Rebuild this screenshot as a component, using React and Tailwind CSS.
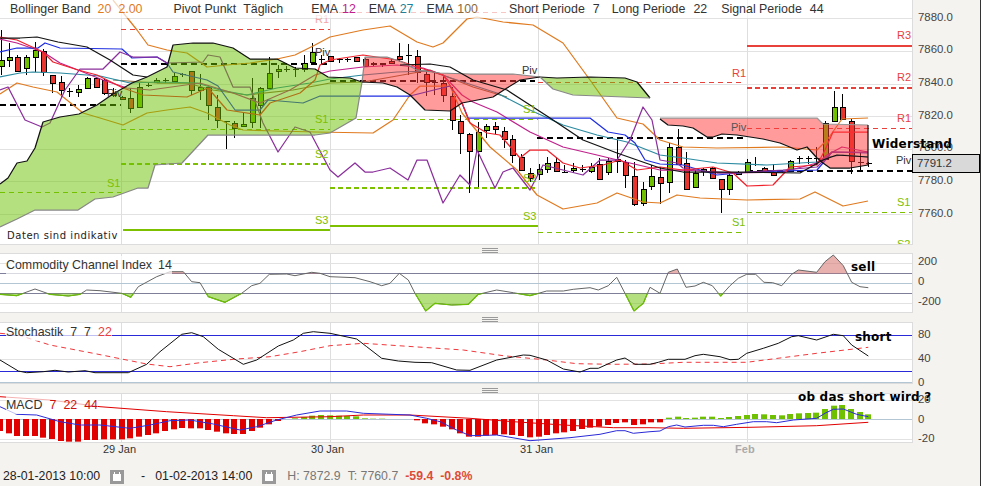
import React from "react";

// zoomed crop coords -> page coords
const zp = (off, top, arr) => arr.map(([x, y]) => [off + x / 3, top + y / 3]);
const line = (arr) => arr.map(([x, y]) => `${x.toFixed(1)},${y.toFixed(1)}`).join(" ");

// main chart series, page coords
const bollUp = [[113,0],[137,30],[148,45],[167,50],[187,53],[207,67],[227,65],[250,63],[277,59],[295,55],[315,45],[330,37],[363,30],[390,26],[417,42],[433,47],[443,43],[467,19],[477,17],[503,22],[533,25],[563,43],[590,80],[617,118],[643,124],[660,140],[683,147],[717,148],[783,147],[817,150],[827,140],[842,119],[868,118]];
const bollLow = [[0,94],[17,83],[33,87],[57,92],[83,113],[100,118],[123,125],[147,113],[167,110],[190,107],[207,113],[230,125],[243,130],[277,131],[315,132],[373,133],[393,120],[410,95],[420,86],[450,86],[462,113],[490,147],[517,170],[537,195],[563,209],[597,203],[617,193],[643,202],[660,203],[677,195],[700,198],[747,200],[800,199],[815,192],[843,206],[868,201]];
const purple = [[0,90],[8,87],[25,120],[42,127],[50,123],[65,90],[80,69],[103,69],[120,52],[133,57],[157,57],[167,63],[203,62],[208,55],[220,57],[233,87],[250,87],[263,123],[278,152],[295,127],[310,132],[330,170],[338,177],[355,163],[365,172],[373,172],[390,168],[408,180],[417,160],[427,160],[443,203],[460,175],[470,185],[477,150],[495,188],[503,172],[513,168],[530,190],[543,165],[563,170],[583,175],[600,160],[617,160],[630,140],[643,107],[652,120],[660,160],[677,163],[683,168],[717,173],[733,173],[783,170],[817,167],[832,152],[868,152]];
const blue = [[0,52],[17,48],[38,48],[45,43],[60,48],[122,49],[132,58],[157,57],[167,63],[173,72],[207,80],[218,86],[235,110],[260,110],[268,100],[303,103],[320,96],[410,96],[450,86],[462,103],[468,118],[590,118],[608,132],[625,135],[635,143],[645,160],[660,164],[683,165],[717,175],[750,172],[817,170],[823,163],[832,152],[868,153]];
const red = [[0,37],[17,40],[43,52],[53,62],[78,70],[97,75],[123,88],[143,95],[187,97],[208,88],[227,110],[260,115],[270,103],[300,93],[315,80],[320,65],[330,60],[363,55],[397,60],[417,67],[443,75],[462,103],[470,123],[487,133],[500,135],[520,158],[530,150],[547,150],[563,163],[580,168],[603,165],[620,160],[637,170],[660,167],[683,170],[713,167],[733,173],[747,186],[773,185],[790,167],[817,165],[825,150],[833,132],[868,132]];
const ema12 = [[0,39],[17,43],[43,52],[60,63],[78,70],[103,80],[127,88],[150,90],[200,83],[233,93],[260,103],[290,90],[315,75],[330,71],[363,67],[397,65],[423,68],[443,75],[462,95],[473,102],[497,112],[530,132],[563,147],[597,155],[630,163],[660,170],[683,170],[733,173],[783,172],[817,163],[827,155],[842,147],[868,152]];
const ema27 = [[0,77],[20,73],[33,72],[60,73],[100,76],[130,83],[157,82],[197,83],[220,90],[247,95],[277,88],[310,83],[330,79],[363,75],[397,72],[430,71],[463,82],[497,93],[530,110],[563,125],[597,135],[627,142],[660,155],[683,158],[717,163],[767,165],[817,162],[827,157],[843,155],[868,157]];
const ema100 = [[113,80],[157,83],[187,83],[213,90],[247,95],[293,90],[330,83],[363,82],[397,76],[430,70],[473,87],[507,97]];
const blackCurve = [[0,38],[20,38],[37,37],[58,42],[87,47],[110,60],[133,75],[147,77]];
const blackCurve2 = [[400,65],[430,64],[450,67],[473,80],[507,90],[550,118],[583,140],[617,153],[660,168],[683,172],[733,172],[800,173],[823,160],[837,155],[868,157]];

const greenUp = [[0,184],[8,178],[17,163],[27,161],[35,148],[43,122],[60,117],[79,114],[97,105],[113,94],[132,83],[147,77],[167,67],[173,45],[193,43],[213,43],[233,48],[250,59],[277,59],[295,68],[315,69],[328,77],[350,78],[362,82]];
const greenLow = [[362,82],[356,118],[330,133],[315,135],[208,135],[182,163],[155,165],[148,188],[138,188],[113,197],[95,199],[78,210],[35,210],[17,219],[0,227]];
const redUp = [[362,82],[365,57],[387,57],[402,62],[417,70],[440,73],[470,74],[513,74],[540,77]];
const redLow = [[540,77],[520,80],[507,88],[493,97],[462,103],[450,111],[425,110],[410,95],[397,87],[383,83],[362,82]];
const green2Up = [[540,77],[557,78],[590,77],[625,78],[637,82],[650,98]];
const green2Low = [[650,98],[573,95],[553,89],[540,77]];
const red2Up = [[660,118],[817,118],[823,124],[868,125],[868,165]];
const red2Low = [[868,165],[850,168],[830,168],[823,163],[817,158],[807,147],[797,150],[780,143],[763,139],[737,135],[722,134],[713,137],[707,137],[693,128],[683,126],[668,125],[660,119]];

// z, top, bottom, wickTop, wickBottom, colour (g / r / k)
const candlesA = [[2,180,197,90,225,"g"],[27,172,182,130,200,"g"],[52,170,212,165,215,"r"],[78,172,205,165,225,"g"],[105,150,170,125,215,"g"],[130,152,215,148,228,"r"],[155,225,248,225,280,"r"],[182,245,268,228,295,"r"],[208,274,275,265,290,"k"],[233,268,276,255,292,"g"],[260,235,265,232,265,"g"],[287,235,262,232,262,"r"],[313,240,280,238,285,"r"],[338,278,285,265,290,"r"],[365,292,298,288,300,"r"],[391,295,325,265,340,"r"],[417,262,322,250,325,"g"],[443,256,257,250,260,"k"],[468,240,246,235,250,"g"],[495,239,240,233,250,"k"],[521,229,243,220,245,"g"],[547,223,224,220,232,"k"],[573,214,270,212,285,"r"],[599,262,270,222,300,"g"],[625,262,316,260,360,"r"],[651,320,360,285,385,"r"],[677,363,364,362,447,"k"],[703,368,382,362,415,"r"],[729,373,379,335,380,"g"],[755,295,368,235,385,"g"],[781,265,317,262,385,"g"],[807,218,263,170,265,"g"],[833,208,214,195,235,"g"],[859,208,209,197,215,"k"],[885,208,209,200,232,"k"],[911,188,206,165,215,"g"],[937,157,187,130,190,"g"],[963,176,177,165,188,"k"]];
const candlesB = [[0,168,182,168,184,"r"],[26,177,178,175,188,"k"],[52,177,178,175,185,"k"],[78,170,182,170,183,"r"],[104,178,198,175,200,"r"],[130,188,192,186,198,"r"],[156,190,193,188,200,"r"],[182,183,190,175,192,"r"],[208,167,177,130,185,"r"],[234,166,167,132,225,"k"],[260,167,215,150,250,"r"],[288,223,247,213,287,"r"],[313,246,247,220,285,"k"],[339,248,283,225,305,"r"],[365,287,360,262,390,"r"],[391,363,398,345,462,"r"],[417,403,455,400,578,"r"],[443,395,452,365,560,"g"],[469,379,392,372,413,"g"],[495,379,388,365,402,"r"],[521,392,415,380,443,"r"],[547,418,465,405,490,"r"],[573,470,508,462,510,"r"],[599,518,532,505,545,"r"],[626,508,523,492,540,"g"],[651,490,507,472,518,"g"],[677,485,512,472,516,"r"],[703,515,516,495,518,"k"],[730,503,508,490,518,"g"],[756,506,507,495,515,"k"],[782,500,512,490,520,"g"],[808,493,538,475,540,"r"],[834,482,515,475,525,"g"],[860,477,484,420,518,"r"],[886,485,523,480,565,"r"],[912,527,610,485,618,"r"],[938,567,608,547,617,"g"]];
const candlesC = [[4,527,558,495,570,"g"],[30,530,547,500,612,"r"],[57,442,547,430,578,"g"],[83,440,490,388,495,"r"],[108,488,565,455,570,"r"],[135,520,563,510,565,"g"],[160,508,513,505,528,"g"],[186,505,535,500,537,"r"],[212,538,568,538,638,"r"],[238,525,568,520,585,"g"],[264,517,522,512,525,"g"],[290,485,515,478,520,"g"],[316,491,492,472,498,"k"],[343,503,515,500,520,"r"],[369,515,523,492,525,"r"],[395,514,515,510,518,"k"],[421,482,512,480,515,"g"],[447,474,475,468,492,"k"],[473,474,475,467,492,"k"],[499,473,474,440,495,"k"],[525,368,475,362,478,"g"],[551,322,365,272,365,"g"],[577,322,357,283,357,"r"],[603,362,482,358,522,"r"],[629,486,487,455,515,"k"],[655,489,490,485,500,"k"]];

const hLines = [
  { x1: 0, x2: 121, y: 105, c: "#000", w: 2, d: "6 4" },
  { x1: 121, x2: 330, y: 64, c: "#000", w: 2, d: "6 4" },
  { x1: 330, x2: 535, y: 81, c: "#000", w: 2, d: "6 4" },
  { x1: 537, x2: 743, y: 137.5, c: "#000", w: 2, d: "6 4" },
  { x1: 747, x2: 912, y: 171, c: "#000", w: 2, d: "6 4" },
  { x1: 121, x2: 330, y: 29.5, c: "#e8413c", w: 1, d: "5 4" },
  { x1: 330, x2: 538, y: 12.5, c: "#e8413c", w: 1, d: "5 4" },
  { x1: 538, x2: 742, y: 82.5, c: "#e8413c", w: 1, d: "5 4" },
  { x1: 747, x2: 912, y: 128.5, c: "#e8413c", w: 1, d: "5 4" },
  { x1: 747, x2: 912, y: 87.5, c: "#e8413c", w: 2, d: "5 3" },
  { x1: 747, x2: 912, y: 45.5, c: "#e8413c", w: 2 },
  { x1: 0, x2: 121, y: 192.5, c: "#7cc000", w: 1, d: "5 4" },
  { x1: 121, x2: 330, y: 129.5, c: "#7cc000", w: 1, d: "5 4" },
  { x1: 330, x2: 538, y: 119.5, c: "#7cc000", w: 1, d: "5 4" },
  { x1: 538, x2: 742, y: 232.5, c: "#7cc000", w: 1, d: "5 4" },
  { x1: 747, x2: 912, y: 212.5, c: "#7cc000", w: 1, d: "5 4" },
  { x1: 121, x2: 330, y: 164, c: "#7cc000", w: 2, d: "5 3" },
  { x1: 330, x2: 535, y: 188, c: "#7cc000", w: 2, d: "5 3" },
  { x1: 123, x2: 330, y: 230, c: "#7cc000", w: 2 },
  { x1: 330, x2: 538, y: 226, c: "#7cc000", w: 2 },
];

const chartLabels = [
  ["R1", 315, 23, "#f3a5a2"], ["R1", 732, 77, "#e8413c"], ["R3", 897, 39, "#e8413c"], ["R2", 897, 81, "#e8413c"], ["R1", 897, 122, "#e8413c"],
  ["Piv", 107, 97, "#333"], ["Piv", 315, 56, "#333"], ["Piv", 522, 74, "#333"], ["Piv", 731, 131, "#555"], ["Piv", 896, 164, "#333"],
  ["S1", 107, 187, "#7cc000"], ["S1", 315, 123, "#7cc000"], ["S2", 315, 158, "#7cc000"], ["S3", 315, 224, "#7cc000"],
  ["S1", 523, 113, "#7cc000"], ["S2", 523, 182, "#7cc000"], ["S3", 523, 220, "#7cc000"], ["S1", 732, 226, "#7cc000"], ["S1", 897, 206, "#7cc000"], ["S2", 897, 248, "#7cc000"],
];

// CCI
const cci = [
  ...zp(0, 245, [[0,148],[50,152],[105,132],[150,148],[205,153],[240,148],[260,135],[300,137],[365,145],[392,157],[415,125],[470,95],[510,80],[550,80],[575,110],[600,113],[625,155],[675,172],[725,145],[755,122],[780,115],[808,88],[860,87],[885,92],[935,82],[960,85]]),
  ...zp(330, 245, [[0,95],[75,98],[120,110],[155,122],[180,115],[208,85],[235,105],[255,145],[287,198],[315,175],[365,180],[415,178],[445,148],[500,135],[550,143],[600,152],[650,138],[700,138],[730,133],[780,128],[805,135],[835,122],[860,97],[885,145],[912,198],[940,175]]),
  ...zp(650, 245, [[0,127],[30,145],[55,82],[82,72],[108,127],[135,123],[160,112],[187,122],[212,153],[240,122],[265,100],[290,88],[317,88],[342,112],[368,113],[395,122],[425,88],[445,75],[500,82],[525,50],[550,30],[580,62],[605,112],[630,125],[655,128]]),
];

// Stochastik
const stoch = [
  ...zp(0, 245, [[0,345],[55,378],[80,383],[130,380],[165,376],[205,381],[255,377],[285,383],[385,383],[440,358],[480,320],[545,268],[575,263],[610,275],[655,313],[730,358],[770,345],[835,303],[880,285],[910,265],[940,260]]),
  ...zp(330, 245, [[0,265],[80,282],[110,305],[155,340],[205,348],[255,352],[305,353],[380,375],[420,376],[500,345],[580,330],[600,331],[650,345],[700,372],[750,381],[780,370],[805,370],[860,345],[885,339],[915,358]]),
  ...zp(650, 245, [[0,358],[25,352],[55,343],[105,343],[135,332],[160,328],[210,335],[240,344],[265,343],[290,325],[340,310],[385,295],[425,275],[445,272],[500,285],[550,268],[580,272],[605,300],[655,333]]),
];
const stochSig = [
  ...zp(0, 245, [[0,265],[55,270],[150,300],[280,325],[365,342],[440,357],[510,365],[600,353],[710,342],[810,335],[900,320]]),
  ...zp(330, 245, [[0,302],[100,295],[250,305],[400,315],[520,332],[650,345],[740,356],[850,358]]),
  ...zp(650, 245, [[0,357],[100,352],[290,352],[500,325],[655,307]]),
];

// MACD
const macdBlue = [
  ...zp(0, 245, [[0,485],[50,508],[110,510],[180,530],[240,540],[300,540],[390,550],[450,540],[510,527],[570,525],[640,537],[720,555],[770,545],[830,525],[890,510],[960,498]]),
  ...zp(330, 245, [[0,498],[50,498],[100,505],[240,510],[290,520],[330,530],[380,555],[420,572],[500,570],[600,587],[720,578],[810,568],[860,557],[885,557],[910,565]]),
  ...zp(650, 245, [[0,560],[30,558],[55,545],[80,540],[105,546],[160,541],[190,541],[220,545],[260,538],[310,530],[350,530],[380,533],[430,525],[500,520],[525,505],[550,493],[580,492],[620,508],[655,515]]),
];
const macdRed = [
  ...zp(0, 245, [[0,455],[150,465],[300,485],[500,500],[700,512],[800,518]]),
  ...zp(330, 245, [[0,515],[100,510],[240,510],[420,520],[550,530],[700,540],[850,548]]),
  ...zp(650, 245, [[0,548],[100,550],[300,547],[500,542],[655,532]]),
];
const barsA = [[0,558],[26,565],[52,573],[78,573],[104,573],[130,578],[156,582],[182,588],[208,590],[234,590],[260,585],[286,585],[312,583],[338,583],[365,583],[391,580],[417,575],[443,570],[468,565],[495,558],[521,553],[547,549],[573,550],[599,550],[625,555],[651,560],[677,565],[703,567],[729,567],[755,558],[781,548],[807,538],[833,528],[859,522],[885,520],[911,516],[937,512],[963,510]];
const barsB = [[0,511],[26,512],[52,513],[78,514],[104,520],[130,521],[156,521],[182,522],[208,522],[234,522],[260,526],[286,535],[312,538],[338,545],[365,553],[391,565],[417,575],[443,575],[469,572],[495,570],[521,568],[547,570],[573,573],[599,577],[626,575],[651,570],[677,565],[703,562],[729,558],[755,552],[781,548],[807,545],[833,540],[859,534],[885,532],[912,540],[938,538]];
const barsC = [[4,532],[30,532],[57,518],[83,515],[108,519],[135,518],[160,515],[186,515],[212,519],[238,516],[264,513],[290,510],[316,507],[343,508],[369,510],[395,511],[421,507],[447,505],[473,504],[499,503],[525,492],[551,482],[577,480],[603,492],[629,501],[655,508]];
const bars = [...zp(0, 245, barsA), ...zp(330, 245, barsB), ...zp(650, 245, barsC)];

const prices = ["7880.0", "7860.0", "7840.0", "7820.0", "7800.0", "7780.0", "7760.0"];

const Candles = ({ off, data }) =>
  data.map(([z, t, b, wt, wb, col], i) => {
    const cx = Math.round(off + z / 3) + 0.5;
    const fill = col === "g" ? "#6fc000" : "#e8352e";
    return (
      <g key={i} shapeRendering="crispEdges">
        <line x1={cx} x2={cx} y1={wt / 3} y2={wb / 3} stroke="#000" />
        {col === "k" ? (
          <line x1={cx - 3} x2={cx + 3} y1={Math.round(t / 3) + 0.5} y2={Math.round(t / 3) + 0.5} stroke="#000" />
        ) : (
          <rect x={cx - 2.5} y={Math.round(t / 3) + 0.5} width={5} height={Math.max(1, Math.round((b - t) / 3))} fill={fill} stroke="#000" />
        )}
      </g>
    );
  });

const VGrid = ({ y1, y2 }) =>
  [121.5, 330.5, 538.5, 747.5].map((x) => <line key={x} x1={x} x2={x} y1={y1} y2={y2} stroke="#dedede" />);

const HGrid = ({ items }) =>
  items.map(([y, c]) => <line key={y} x1={0} x2={913} y1={y} y2={y} stroke={c} shapeRendering="crispEdges" />);

const PolyL = ({ p, c, w = 1.25, d }) => (
  <polyline points={line(p)} fill="none" stroke={c} strokeWidth={w} strokeDasharray={d} strokeLinejoin="round" />
);

const Legend = ({ className, children }) => (
  <div className={`absolute flex whitespace-nowrap bg-white/70 text-[12.4px] leading-[18px] text-[#333] ${className}`}>{children}</div>
);

const Handle = ({ className }) => (
  <div className={`flex flex-col items-center justify-end gap-px ${className}`}>
    <div className="h-px w-4 bg-[#999]" />
    <div className="h-px w-4 bg-[#999]" />
    <div className="h-px w-4 bg-[#999]" />
  </div>
);

const CalendarIcon = () => (
  <svg width="14" height="14" viewBox="0 0 14 14" className="block shrink-0">
    <rect width="14" height="14" fill="#999" />
    <rect x="3" y="4" width="8" height="7" fill="#fff" />
    <rect x="4" y="2" width="1" height="3" fill="#fff" />
    <rect x="9" y="2" width="1" height="3" fill="#fff" />
  </svg>
);

const Note = ({ className, children }) => (
  <span className={`absolute z-10 whitespace-nowrap font-['DejaVu_Sans',sans-serif] text-[12px] leading-[14px] font-bold tracking-[0.2px] text-black ${className}`}>
    {children}
  </span>
);

export default function App() {
  const cciPoly = [[cci[0][0], 283.5], ...cci, [cci[cci.length - 1][0], 283.5]];
  return (
    <div className="relative flex h-[486px] w-[981px] flex-col overflow-hidden border-r border-[#333] bg-[#f5f3ef] font-['Liberation_Sans',Arial,sans-serif] text-[#444]">
      {/* price chart */}
      <div className="flex h-[245px]">
        <div className="relative h-full w-[913px] shrink-0 overflow-hidden border-r border-b border-[#dcdcdc] bg-white">
          <svg width="913" height="245" viewBox="0 0 913 245" className="block text-[11px]">
            <HGrid items={[[18.5, "#e2e2e2"], [51.5, "#e2e2e2"], [84.5, "#e2e2e2"], [116.5, "#e2e2e2"], [149.5, "#e2e2e2"], [181.5, "#e2e2e2"], [214.5, "#e2e2e2"]]} />
            <VGrid y1={0} y2={245} />
            {hLines.map((l, i) => (
              <line key={i} x1={l.x1} x2={l.x2} y1={l.y} y2={l.y} stroke={l.c} strokeWidth={l.w} strokeDasharray={l.d} shapeRendering="crispEdges" />
            ))}
            <Candles off={0} data={candlesA} />
            <Candles off={330} data={candlesB} />
            <Candles off={650} data={candlesC} />
            <PolyL p={bollUp} c="#e07a1f" />
            <PolyL p={bollLow} c="#e07a1f" />
            <PolyL p={ema100} c="#8a6a3a" />
            <PolyL p={ema27} c="#2b8aa0" />
            <PolyL p={ema12} c="#c0208c" />
            <PolyL p={blue} c="#1f2fe0" />
            <PolyL p={purple} c="#8b2f9c" />
            <PolyL p={red} c="#f0202a" />
            <polygon points={line([...greenUp, ...greenLow])} fill="#6bc100" fillOpacity="0.5" />
            <polygon points={line([...redUp, ...redLow])} fill="#ff3838" fillOpacity="0.5" />
            <polygon points={line([...green2Up, ...green2Low])} fill="#6bc100" fillOpacity="0.5" />
            <polygon points={line([...red2Up, ...red2Low])} fill="#ff3838" fillOpacity="0.5" />
            <PolyL p={greenUp} c="#111" />
            <PolyL p={greenLow} c="#888" />
            <PolyL p={redUp} c="#888" />
            <PolyL p={redLow} c="#111" />
            <PolyL p={green2Up} c="#111" />
            <PolyL p={green2Low} c="#888" />
            <PolyL p={[[660, 118], [817, 118], [823, 124], [868, 125]]} c="#999" />
            <PolyL p={[[868, 125], [868, 165]]} c="#111" />
            <PolyL p={red2Low} c="#111" />
            <PolyL p={blackCurve} c="#111" />
            <PolyL p={blackCurve2} c="#111" />
            {chartLabels.map(([t, x, y, c], i) => (
              <text key={i} x={x} y={y} fill={c}>
                {t}
              </text>
            ))}
          </svg>
          <Legend className="top-0 left-0 h-[18px] w-[827px] pl-[10px]">
            <span>Bollinger Band</span>
            <span className="ml-[7px] text-[#e07a1f]">20</span>
            <span className="ml-[7px] text-[#e07a1f]">2.00</span>
            <span className="ml-[31px]">Pivot Punkt</span>
            <span className="ml-[7px]">Täglich</span>
            <span className="ml-[28px]">EMA</span>
            <span className="ml-[4px] text-[#c0208c]">12</span>
            <span className="ml-[13px]">EMA</span>
            <span className="ml-[4px] text-[#1d8299]">27</span>
            <span className="ml-[13px]">EMA</span>
            <span className="ml-[4px] text-[#8a6a3a]">100</span>
            <span className="ml-[31px]">Short Periode</span>
            <span className="ml-[8px]">7</span>
            <span className="ml-[12px]">Long Periode</span>
            <span className="ml-[8px]">22</span>
            <span className="ml-[14px]">Signal Periode</span>
            <span className="ml-[8px]">44</span>
          </Legend>
          <div className="absolute top-[228px] left-0 h-[15px] w-[121px] bg-white pl-[7px] font-['DejaVu_Sans',sans-serif] text-[10px] leading-[15px] tracking-[0.55px] text-[#222]">
            Daten sind indikativ
          </div>
        </div>
        <div className="flex flex-col pt-px pl-[5px] text-[11.4px]">
          {prices.map((p) => (
            <div key={p} className="flex h-[32.67px] shrink-0 items-center">
              {p}
            </div>
          ))}
        </div>
      </div>
      <Note className="top-[137px] left-[872px]">Widerstand</Note>
      <div className="absolute top-[154px] left-[912px] z-0 flex h-[19px] w-[68px] items-center border border-black bg-[#d9d9d9] pl-1 text-[11.4px] text-[#333]">
        7791.2
      </div>

      <Handle className="h-[8px]" />

      {/* CCI */}
      <div className="flex h-[60px]">
        <div className="relative h-full w-[913px] shrink-0 overflow-hidden border-t border-r border-b border-[#dcdcdc] bg-white">
          <svg width="913" height="60" viewBox="0 254 913 60" className="block">
            <defs>
              <clipPath id="cciUp">
                <rect x="0" y="240" width="913" height="33.5" />
              </clipPath>
              <clipPath id="cciDown">
                <rect x="0" y="293.5" width="913" height="30" />
              </clipPath>
            </defs>
            <VGrid y1={254} y2={314} />
            <HGrid items={[[263.5, "#e2e2e2"], [273.5, "#7f7f99"], [283.5, "#b3c6d4"], [293.5, "#7f7f99"], [303.5, "#e2e2e2"]]} />
            <polygon points={line(cciPoly)} fill="#d97d78" fillOpacity="0.6" clipPath="url(#cciUp)" />
            <polygon points={line(cciPoly)} fill="#6bc100" fillOpacity="0.5" clipPath="url(#cciDown)" />
            <PolyL p={cci} c="#666" w={1} />
            <g clipPath="url(#cciDown)">
              <PolyL p={cci} c="#6bc100" />
            </g>
          </svg>
          <Legend className="top-[2px] left-[6px] h-[18px]">
            <span>Commodity Channel Index</span>
            <span className="ml-[6px]">14</span>
          </Legend>
        </div>
        <div className="flex flex-col pl-[5px] text-[11.4px]">
          {["200", "0", "-200"].map((v) => (
            <div key={v} className="flex h-[20px] shrink-0 items-center first:mt-[-1px]">
              {v}
            </div>
          ))}
        </div>
      </div>
      <Note className="top-[260px] left-[851px]">sell</Note>

      <Handle className="h-[9px]" />

      {/* Stochastik */}
      <div className="flex h-[62px]">
        <div className="relative h-full w-[913px] shrink-0 overflow-hidden border-t border-r border-b border-[#dcdcdc] bg-white">
          <svg width="913" height="62" viewBox="0 323 913 62" className="block">
            <VGrid y1={323} y2={385} />
            <HGrid items={[[335.5, "#2a2ad8"], [359.5, "#e2e2e2"], [371.5, "#2a2ad8"], [382.5, "#b3c6d4"]]} />
            <PolyL p={stochSig} c="#f0383c" w={1} d="5 4" />
            <PolyL p={stoch} c="#111" w={1} />
          </svg>
          <Legend className="top-0 left-[6px] h-[18px] bg-white/60">
            <span>Stochastik</span>
            <span className="ml-[7px]">7</span>
            <span className="ml-[7px]">7</span>
            <span className="ml-[7px] text-[#e8413c]">22</span>
          </Legend>
        </div>
        <div className="flex flex-col pl-[5px] text-[11.4px]">
          {["80", "40", "0"].map((v) => (
            <div key={v} className="flex h-[24px] shrink-0 items-center first:mt-[1px]">
              {v}
            </div>
          ))}
        </div>
      </div>
      <Note className="top-[330px] left-[855px]">short</Note>

      <Handle className="h-[9px]" />

      {/* MACD */}
      <div className="flex h-[50px]">
        <div className="relative h-full w-[913px] shrink-0 overflow-hidden border-t border-r border-b border-[#dcdcdc] bg-white">
          <svg width="913" height="50" viewBox="0 394 913 50" className="block">
            <VGrid y1={394} y2={444} />
            <HGrid items={[[400.5, "#e2e2e2"], [419.5, "#b3c6d4"], [439.5, "#e2e2e2"]]} />
            {bars.map(([x, y], i) => (
              <rect
                key={i}
                x={Math.round(x) - 3}
                y={Math.min(y, 419)}
                width={6}
                height={Math.abs(y - 419)}
                fill={y > 419.2 ? "#e00000" : "#6fc000"}
              />
            ))}
            <PolyL p={macdRed} c="#e00000" w={1} />
            <PolyL p={macdBlue} c="#2a2ad8" w={1} />
          </svg>
          <Legend className="top-[2px] left-[6px] h-[18px] bg-white/60">
            <span>MACD</span>
            <span className="ml-[7px] text-[#cc1111]">7</span>
            <span className="ml-[7px] text-[#cc1111]">22</span>
            <span className="ml-[7px] text-[#cc1111]">44</span>
          </Legend>
        </div>
        <div className="flex flex-col pl-[5px] text-[11.4px]">
          {["20", "0", "-20"].map((v) => (
            <div key={v} className="flex h-[19.5px] shrink-0 items-center first:mt-[-3px]">
              {v}
            </div>
          ))}
        </div>
      </div>
      <Note className="top-[390px] left-[798px]">ob das short wird ?</Note>

      {/* time axis */}
      <div className="flex h-[17px] w-[913px] items-center pb-1 text-[11px] font-medium text-[#333]">
        <span className="ml-[103px]">29 Jan</span>
        <span className="ml-[175px]">30 Jan</span>
        <span className="ml-[176px]">31 Jan</span>
        <span className="ml-[182px] font-bold text-[#aaa]">Feb</span>
      </div>

      {/* footer */}
      <div className="flex flex-1 items-end pb-[2px] pl-[3px] text-[12.3px] leading-[16px]">
        <span className="text-[#222]">28-01-2013 10:00</span>
        <span className="ml-[10px]"><CalendarIcon /></span>
        <span className="ml-[17px] text-[#222]">-</span>
        <span className="ml-[10px] text-[#222]">01-02-2013 14:00</span>
        <span className="ml-[10px]"><CalendarIcon /></span>
        <span className="ml-[11px] text-[#777]">H: 7872.9</span>
        <span className="ml-[7px] text-[#777]">T: 7760.7</span>
        <span className="ml-[7px] font-bold text-[#dd4b39]">-59.4</span>
        <span className="ml-[7px] font-bold text-[#dd4b39]">-0.8%</span>
      </div>
    </div>
  );
}
